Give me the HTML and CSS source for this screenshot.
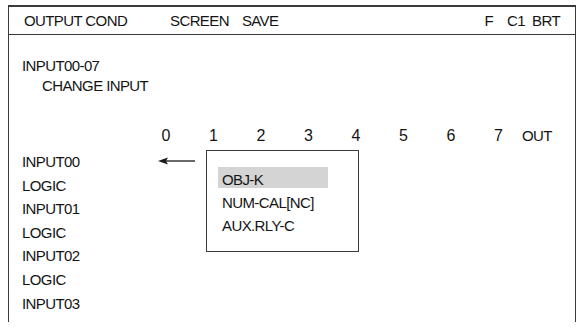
FILE: index.html
```html
<!DOCTYPE html>
<html lang="en">
<head>
    <meta charset="UTF-8">
    <title>Output Cond</title>
    <link rel="stylesheet" href="styles.css">
</head>
<body>
    <div id="screen">
        <div id="title-bar">
            <span class="title-left">OUTPUT COND</span>
            <div class="title-mid">
                <span>SCREEN</span>
                <span>SAVE</span>
            </div>
            <div class="title-right">
                <span>F</span>
                <span class="c1">C1</span>
                <span>BRT</span>
            </div>
        </div>

        <div id="content">
            <div class="caption">INPUT00-07</div>
            <div class="caption indent">CHANGE INPUT</div>

            <div id="columns">
                <span class="col">0</span>
                <span class="col">1</span>
                <span class="col">2</span>
                <span class="col">3</span>
                <span class="col">4</span>
                <span class="col">5</span>
                <span class="col">6</span>
                <span class="col">7</span>
                <span class="col-out">OUT</span>
            </div>

            <div id="rows">
                <div class="row">INPUT00</div>
                <div class="row">LOGIC</div>
                <div class="row">INPUT01</div>
                <div class="row">LOGIC</div>
                <div class="row">INPUT02</div>
                <div class="row">LOGIC</div>
                <div class="row">INPUT03</div>
                <div class="row">LOGIC</div>
            </div>
        </div>

        <svg class="arrow" width="38" height="8" viewBox="0 0 38 8">
            <path d="M0 4 L10 0.5 L8 4 L10 7.5 Z" fill="#1a1a1a"/>
            <line x1="8" y1="4" x2="37" y2="4" stroke="#1a1a1a" stroke-width="1.3"/>
        </svg>

        <div id="menu">
            <div class="menu-item selected">OBJ-K</div>
            <div class="menu-item">NUM-CAL[NC]</div>
            <div class="menu-item">AUX.RLY-C</div>
        </div>
    </div>
</body>
</html>
```

FILE: styles.css
```css
body {
    margin: 0;
    background: #ffffff;
    font-family: "Liberation Sans", Arial, sans-serif;
    font-size: 15px;
    letter-spacing: -0.6px;
    color: #141414;
}
#screen {
    position: relative;
    margin: 5px 0 0 8px;
    width: 566px;
    height: 315px;
    border: 1px solid #3a3a3a;
    border-top-width: 2px;
    border-bottom: none;
    overflow: hidden;
}
#title-bar {
    display: flex;
    align-items: center;
    height: 27px;
    padding: 0 15px 0 15px;
    border-bottom: 1px solid #3a3a3a;
}
.title-left {
    width: 146px;
}
.title-mid {
    display: flex;
    gap: 13px;
}
.title-right {
    display: flex;
    gap: 14px;
    margin-left: auto;
}
.title-right .c1 {
    margin-right: -7px;
}
#content {
    padding: 21px 0 0 13px;
}
.caption {
    line-height: 20px;
}
.indent {
    padding-left: 20px;
}
#columns {
    display: flex;
    margin-top: 30px;
    padding-left: 120px;
    line-height: 20px;
    font-size: 16px;
}
.col {
    width: 47.5px;
    text-align: center;
}
.col-out {
    font-size: 15px;
}
#rows {
    margin-top: 4px;
}
.row {
    line-height: 23.6px;
}
.arrow {
    position: absolute;
    left: 149px;
    top: 150px;
}
#menu {
    position: absolute;
    left: 197px;
    top: 143px;
    width: 153px;
    height: 102px;
    border: 1px solid #3a3a3a;
    padding: 16px 0 0 11px;
    box-sizing: border-box;
}
.menu-item {
    width: 110px;
    height: 23px;
    line-height: 25px;
    padding-left: 4px;
    box-sizing: border-box;
}
.menu-item.selected {
    background: #d4d4d4;
    height: 21px;
    line-height: 21px;
    padding-top: 2px;
    margin-bottom: 2px;
}
```
